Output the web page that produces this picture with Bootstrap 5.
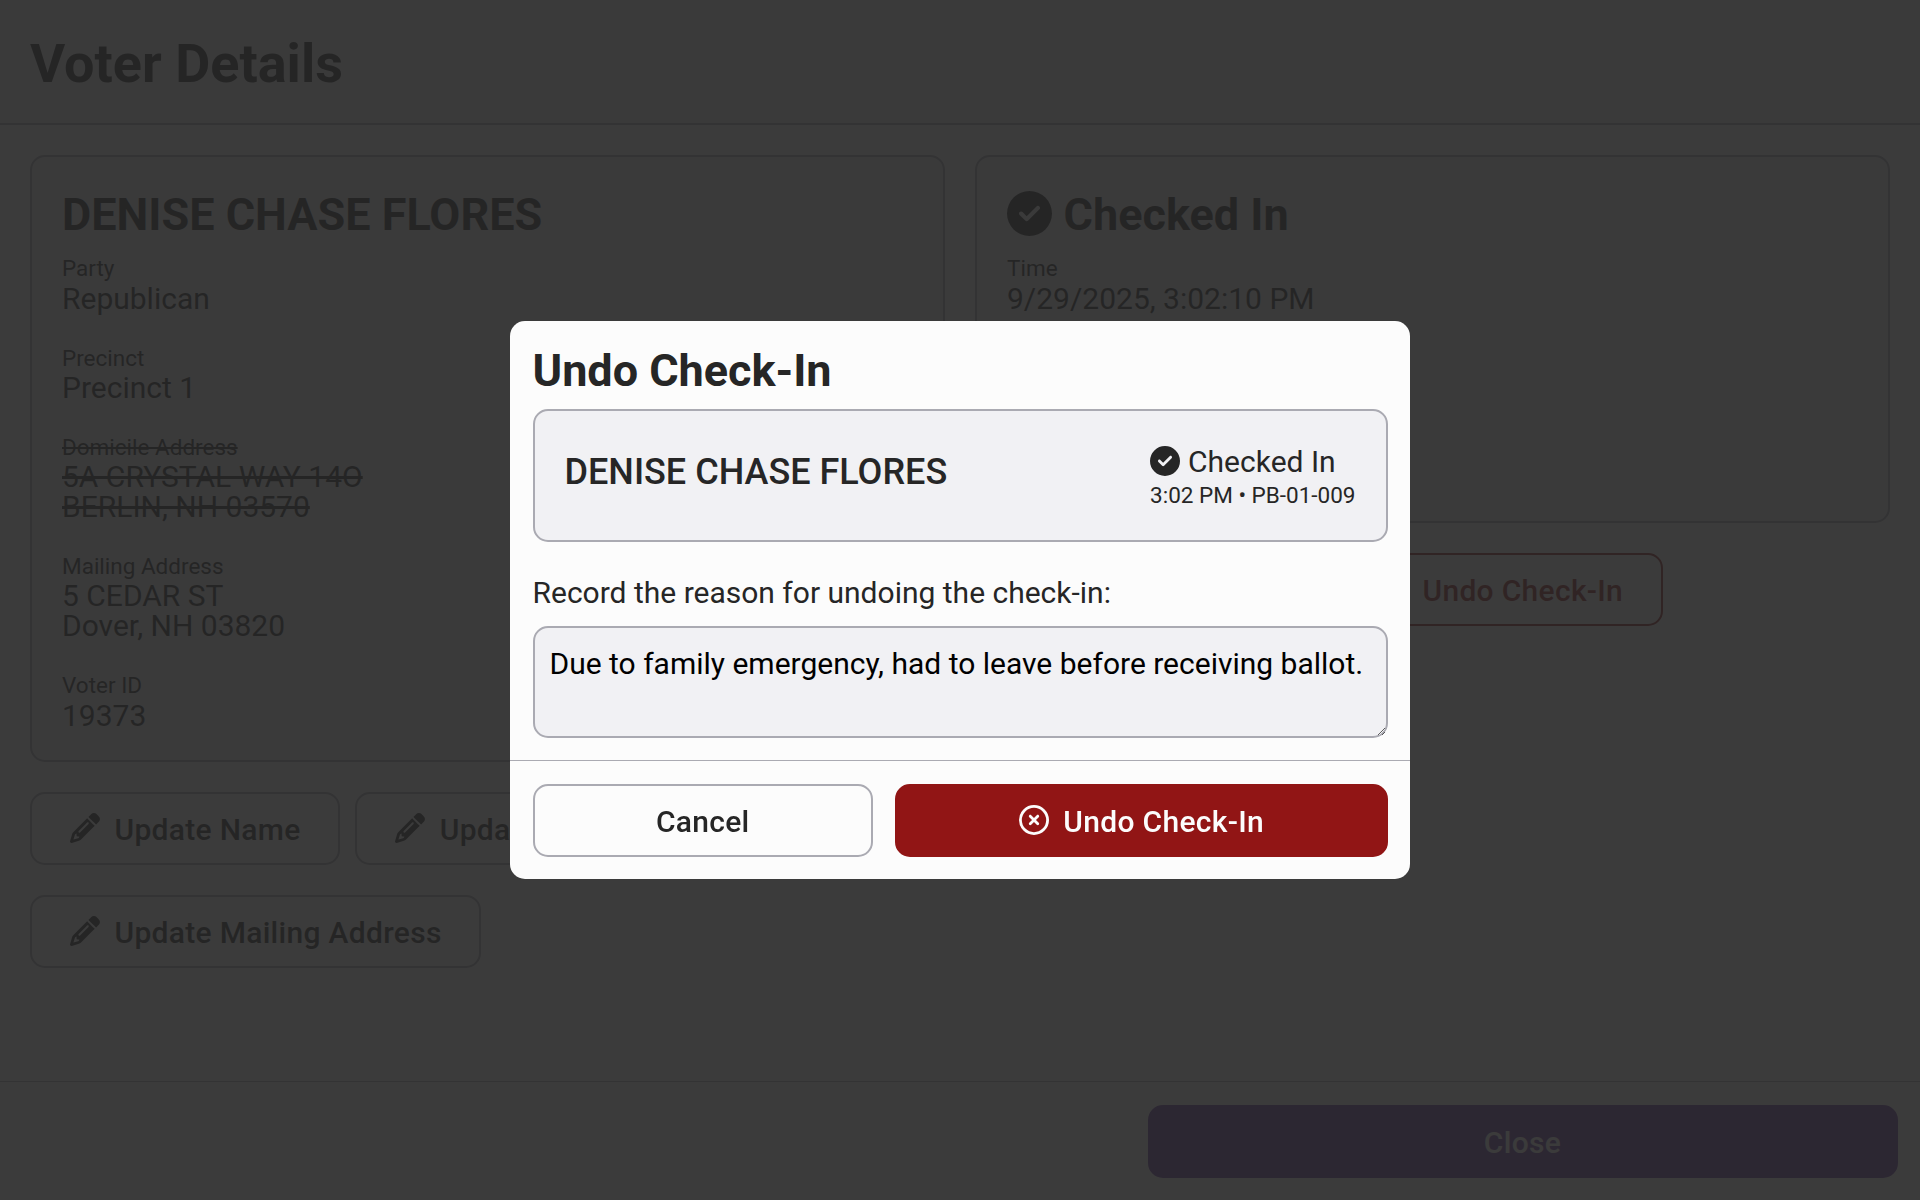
<!DOCTYPE html>
<html lang="en">
<head>
<meta charset="utf-8">
<meta name="viewport" content="width=device-width, initial-scale=1">
<title>Voter Details</title>
<link href="https://cdn.jsdelivr.net/npm/bootstrap@5.3.0/dist/css/bootstrap.min.css" rel="stylesheet">
<style>
  body { font-family: Roboto, sans-serif; font-size: 30px; line-height: 1; color: #262626; background: #fcfcfc; letter-spacing: 0; }
  .page-head { height: 125px; padding: 6px 30px 0; border-bottom: 2px solid #aaaab2; background: #f1f1f4; }
  .page-head h1 { font-size: 54px; font-weight: 700; line-height: 1.2; }
  .main-area { padding: 30px; gap: 30px; }
  .pane { flex: 1 1 0; min-width: 0; gap: 30px; }
  .info-box { border: 2px solid #aaaab2; border-radius: 15px; background: #f1f1f4; padding: 30px 30px 29.5px; }
  .info-box h2 { font-size: 45px; font-weight: 700; line-height: 54px; padding-top: 1px; margin-bottom: 12.45px; }
  .info-box h2 svg { margin: -3px 11.5px 0 0; }
  .checkin-box { height: 368px; }
  .field + .field { margin-top: 30px; }
  .field-name { font-size: 22.5px; line-height: 28.65px; padding-bottom: .6px; }
  .btn-row { gap: 30px 15px; }
  .checkin-actions { padding-left: 363px; }
  .act { height: 73px; border: 2px solid #aaaab2; border-radius: 15px; font-size: 30px; font-weight: 500; line-height: 1; letter-spacing: .01em; padding: 0 37.7px; gap: 14.8px; color: #262626; display: inline-flex; align-items: center; justify-content: center; white-space: nowrap; }
  .act span { padding-top: 2px; }
  .act svg { width: 30px; height: 30px; margin-top: -1px; }
  .act-danger { border-color: #911515; color: #911515; }
  .act-fill-danger { background: #911515; border-color: #911515; color: #fcfcfc; }
  .act-primary { background: #6a35a5; border-color: #6a35a5; color: #fcfcfc; width: 750px; }
  .page-foot { padding: 22.5px; border-top: 1px solid #aaaab2; }
  .dialog-foot .act span, .page-foot .act span { padding-top: 3px; }
  .shade { background: rgba(38, 38, 38, .9); z-index: 1050; }
  .dialog { width: 900px; height: 558px; border-radius: 15px; background: #fcfcfc; }
  .dialog-main { padding: 22.5px 22.5px 0; }
  .dialog h2 { font-size: 45px; font-weight: 700; line-height: 54px; margin-bottom: 11.5px; letter-spacing: -.03px; }
  .person { height: 133px; border: 2px solid #aaaab2; border-radius: 15px; background: #f1f1f4; padding: 0 30px; }
  .person-name { font-size: 36px; font-weight: 500; padding-bottom: 8px; }
  .status-line { gap: 8px; height: 37px; }
  .status-line svg { width: 30px; height: 30px; margin-top: -1px; }
  .status-sub { font-size: 22.5px; line-height: 28px; padding-top: 1px; margin-bottom: -1px; }
  .reason-label { margin: 36px 0 18px; line-height: 30px; }
  .reason { display: block; width: 100%; height: 112px; border: 2px solid #aaaab2; border-radius: 15px; background: #f1f1f4; color: #000; font-size: 30px; line-height: 36px; padding: 18px 15px 15px; }
  .dialog-foot { border-top: 1px solid #aaaab2; padding: 23px 22.5px 22.5px; gap: 22px; }
  .cancel { width: 340.5px; }
</style>
</head>
<body>
<svg class="d-none">
  <symbol id="check" viewBox="0 0 512 512"><path fill="currentColor" d="M256 512A256 256 0 1 0 256 0a256 256 0 1 0 0 512zM369 209L241 337c-9.4 9.4-24.6 9.4-33.9 0l-64-64c-9.4-9.4-9.4-24.6 0-33.9s24.6-9.4 33.9 0l47 47L335 175c9.4-9.4 24.6-9.4 33.9 0s9.4 24.6 0 33.9z"/></symbol>
  <symbol id="xmark" viewBox="0 0 512 512"><path fill="currentColor" d="M256 48a208 208 0 1 1 0 416 208 208 0 1 1 0-416zm0 464A256 256 0 1 0 256 0a256 256 0 1 0 0 512zM175 175c-9.4 9.4-9.4 24.6 0 33.9l47 47-47 47c-9.4 9.4-9.4 24.6 0 33.9s24.6 9.4 33.9 0l47-47 47 47c9.4 9.4 24.6 9.4 33.9 0s9.4-24.6 0-33.9l-47-47 47-47c9.4-9.4 9.4-24.6 0-33.9s-24.6-9.4-33.9 0l-47 47-47-47c-9.4-9.4-24.6-9.4-33.9 0z"/></symbol>
  <symbol id="pencil" viewBox="0 0 512 512"><path fill="currentColor" d="M410.3 231l11.3-11.3-33.9-33.9-62.1-62.1L291.7 89.8l-11.3 11.3-22.6 22.6L58.6 322.9c-10.4 10.4-18 23.3-22.2 37.4L1 480.7c-2.5 8.4-.2 17.5 6.1 23.7s15.3 8.5 23.7 6.1l120.3-35.4c14.1-4.2 27-11.8 37.4-22.2L387.7 253.7 410.3 231zM160 399.4l-9.1 22.7c-4 3.1-8.5 5.4-13.3 6.9L59.4 452l23-78.1c1.4-4.9 3.8-9.4 6.9-13.3l22.7-9.1v32c0 8.8 7.2 16 16 16h32zM362.7 18.7L348.3 33.2 325.7 55.8 314.3 67.1l33.9 33.9 62.1 62.1 33.9 33.9 11.3-11.3 22.6-22.6 14.5-14.5c25-25 25-65.5 0-90.5L453.3 18.7c-25-25-65.5-25-90.5 0zm-47.4 168l-144 144c-6.2 6.2-16.4 6.2-22.6 0s-6.2-16.4 0-22.6l144-144c6.2-6.2 16.4-6.2 22.6 0s6.2 16.4 0 22.6z"/></symbol>
</svg>

<div class="d-flex flex-column vh-100">
  <header class="page-head d-flex align-items-center">
    <h1 class="mb-0">Voter Details</h1>
  </header>
  <main class="main-area d-flex flex-grow-1">
    <section class="pane d-flex flex-column">
      <div class="info-box">
        <h2>DENISE CHASE FLORES</h2>
        <div class="field"><div class="field-name">Party</div><div>Republican</div></div>
        <div class="field"><div class="field-name">Precinct</div><div>Precinct 1</div></div>
        <div class="field text-decoration-line-through"><div class="field-name">Domicile Address</div><div>5A CRYSTAL WAY 14O</div><div>BERLIN, NH 03570</div></div>
        <div class="field"><div class="field-name">Mailing Address</div><div>5 CEDAR ST</div><div>Dover, NH 03820</div></div>
        <div class="field"><div class="field-name">Voter ID</div><div>19373</div></div>
      </div>
      <div class="btn-row d-flex flex-wrap">
        <button class="btn act" type="button"><svg><use href="#pencil"/></svg><span>Update Name</span></button>
        <button class="btn act" type="button"><svg><use href="#pencil"/></svg><span>Update Domicile Address</span></button>
        <button class="btn act" type="button"><svg><use href="#pencil"/></svg><span>Update Mailing Address</span></button>
      </div>
    </section>
    <section class="pane d-flex flex-column">
      <div class="info-box checkin-box">
        <h2 class="d-flex align-items-center"><svg width="45" height="45" class="flex-shrink-0"><use href="#check"/></svg><span>Checked In</span></h2>
        <div class="field"><div class="field-name">Time</div><div>9/29/2025, 3:02:10 PM</div></div>
      </div>
      <div class="checkin-actions d-flex">
        <button class="btn act act-danger" type="button"><svg><use href="#xmark"/></svg><span>Undo Check-In</span></button>
      </div>
    </section>
  </main>
  <footer class="page-foot d-flex justify-content-end">
    <button class="btn act act-primary" type="button"><span>Close</span></button>
  </footer>
</div>

<div class="shade position-fixed top-0 start-0 w-100 h-100 d-flex align-items-center justify-content-center">
  <div class="dialog d-flex flex-column" role="dialog" aria-modal="true">
    <div class="dialog-main flex-grow-1">
      <h2>Undo Check-In</h2>
      <div class="person d-flex align-items-center justify-content-between">
        <div class="person-name">DENISE CHASE FLORES</div>
        <div>
          <div class="status-line d-flex align-items-center"><svg><use href="#check"/></svg><span>Checked In</span></div>
          <div class="status-sub">3:02 PM • PB-01-009</div>
        </div>
      </div>
      <div class="reason-label">Record the reason for undoing the check-in:</div>
      <textarea class="reason" aria-label="Reason">Due to family emergency, had to leave before receiving ballot.</textarea>
    </div>
    <div class="dialog-foot d-flex">
      <button class="btn act cancel" type="button"><span>Cancel</span></button>
      <button class="btn act act-fill-danger flex-grow-1" type="button"><svg><use href="#xmark"/></svg><span>Undo Check-In</span></button>
    </div>
  </div>
</div>
<script src="https://cdn.jsdelivr.net/npm/bootstrap@5.3.0/dist/js/bootstrap.bundle.min.js"></script>
</body>
</html>
